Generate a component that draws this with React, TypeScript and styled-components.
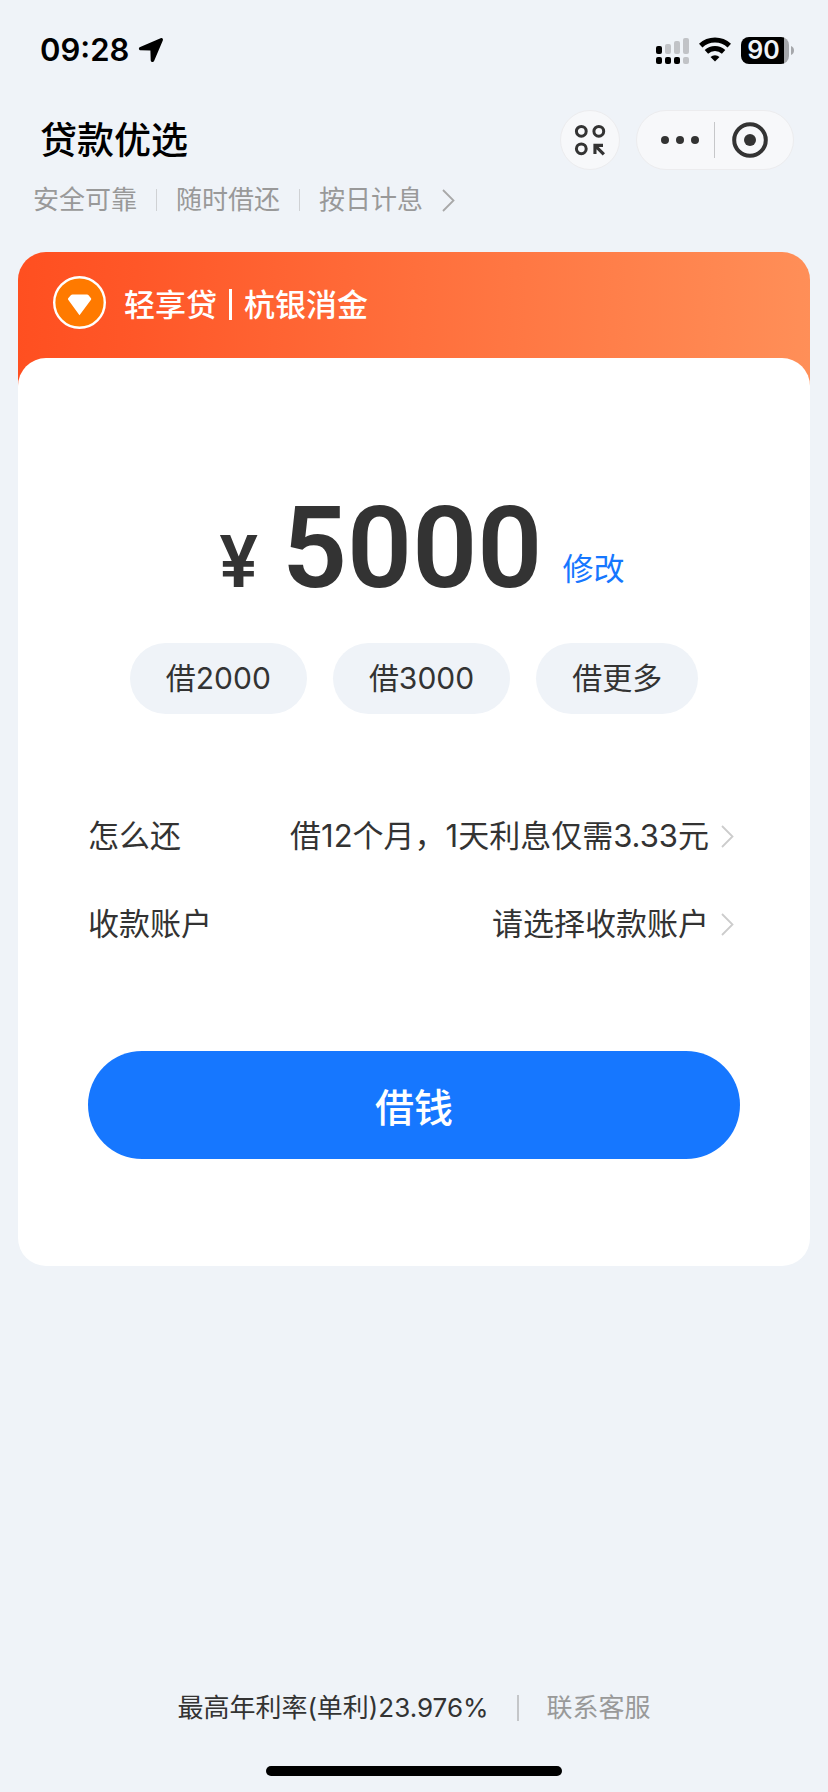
import React from 'react';
import styled, { createGlobalStyle } from 'styled-components';

const GlobalStyle = createGlobalStyle`
  *, *::before, *::after { box-sizing: border-box; }
  body {
    margin: 0;
    background: #eff3f8;
    color: #333;
    font-family: Inter, 'Noto Sans CJK SC', sans-serif;
  }
  button { font-family: inherit; border: 0; margin: 0; padding: 0; background: none; color: inherit; cursor: pointer; }
  a { color: inherit; text-decoration: none; }
  svg { display: block; flex: none; }
`;

const Page = styled.div`
  display: flex;
  flex-direction: column;
  min-height: 100vh;
`;

const StatusBar = styled.div`
  display: flex;
  align-items: center;
  justify-content: space-between;
  height: 100px;
  padding: 0 34px 0 40px;
  color: #000;
`;

const StatusGroup = styled.div<{ $gap: number }>`
  display: flex;
  align-items: center;
  gap: ${(p) => p.$gap}px;
`;

const Time = styled.time`
  font-size: 31px;
  font-weight: 600;
  line-height: 40px;
`;

const Battery = styled.div`
  display: flex;
  align-items: center;
  gap: 2px;
`;

const BatteryLevel = styled.div`
  width: 48px;
  height: 27px;
  padding-right: 3px;
  border-radius: 8px;
  background: linear-gradient(to right, #000 90%, #a5a7ab 90%);
  color: #eff3f8;
  font-size: 25px;
  font-weight: 600;
  line-height: 27px;
  text-align: center;
`;

const NavBar = styled.header`
  display: flex;
  align-items: center;
  justify-content: space-between;
  height: 80px;
  padding: 0 34px 0 40px;
`;

const Title = styled.h1`
  margin: 0;
  padding-top: 2px;
  color: #000;
  font-size: 37px;
  font-weight: 500;
  line-height: 52px;
`;

const NavActions = styled.div`
  display: flex;
  gap: 16px;
`;

const Capsule = styled.div<{ $inset?: number }>`
  display: flex;
  align-items: center;
  height: 60px;
  padding: 0 ${(p) => p.$inset ?? 0}px;
  border: 1px solid #ececee;
  border-radius: 30px;
  background: #f7f8fa;
`;

const CapsuleButton = styled.button<{ $width: number }>`
  display: flex;
  align-items: center;
  justify-content: center;
  width: ${(p) => p.$width}px;
  height: 58px;
`;

const Rule = styled.span<{ $height: number; $color: string; $width?: number }>`
  flex: none;
  width: ${(p) => p.$width ?? 1}px;
  height: ${(p) => p.$height}px;
  background: ${(p) => p.$color};
`;

const Features = styled.a`
  display: flex;
  align-items: center;
  align-self: flex-start;
  gap: 19px;
  height: 40px;
  margin-left: 33px;
  color: #999;
  font-size: 26px;
  line-height: 38px;
`;

const Card = styled.main`
  margin: 32px 18px 0;
`;

const CardHeader = styled.div`
  display: flex;
  align-items: center;
  gap: 18px;
  height: 134px;
  padding: 0 35px 34px;
  border-radius: 28px 28px 0 0;
  background: linear-gradient(92deg, #ff4f20 0%, #ff5728 15%, #ff6f3c 50%, #ff8f58 100%);
`;

const Provider = styled.h2`
  display: flex;
  align-items: center;
  gap: 12px;
  margin: 0;
  padding-top: 5px;
  color: #fff;
  font-size: 31px;
  font-weight: 500;
  line-height: 44px;
`;

const CardBody = styled.div`
  display: flex;
  flex-direction: column;
  margin-top: -28px;
  padding: 120px 70px 107px;
  border-radius: 28px;
  background: #fff;
`;

const Amount = styled.div`
  display: flex;
  align-items: baseline;
  justify-content: center;
  height: 120px;
  padding-left: 16px;
  font-family: Roboto, 'Noto Sans CJK SC', sans-serif;
  font-weight: 600;
  line-height: 140px;
`;

const Currency = styled.span`
  margin-right: 24px;
  font-size: 72px;
`;

const Value = styled.span`
  margin-right: 20px;
  font-size: 114px;
`;

const EditButton = styled.button`
  align-self: flex-end;
  margin-bottom: 6px;
  color: #1677ff;
  font-size: 31px;
  line-height: 44px;
`;

const Options = styled.div`
  display: flex;
  justify-content: center;
  gap: 26px;
  margin-top: 45px;
`;

const Option = styled.button`
  height: 71px;
  padding: 0 36px;
  border-radius: 36px;
  background: #eff3f8;
  font-size: 30px;
  line-height: 71px;
  white-space: nowrap;
`;

const Details = styled.div`
  margin-top: 78px;
`;

const DetailRow = styled.button`
  display: flex;
  align-items: center;
  width: 100%;
  height: 88px;
  padding-right: 6px;
  font-size: 31px;
  line-height: 44px;
`;

const DetailValue = styled.span`
  margin: 0 12px 0 auto;
`;

const Submit = styled.button`
  height: 108px;
  margin-top: 83px;
  border-radius: 54px;
  background: #1677ff;
  color: #fff;
  font-size: 39px;
  font-weight: 500;
`;

const Footer = styled.footer`
  display: flex;
  align-items: center;
  justify-content: center;
  gap: 28px;
  margin-top: auto;
  padding-top: 40px;
  font-size: 26px;
  line-height: 38px;
`;

const ContactLink = styled.a`
  color: #999;
`;

const HomeIndicator = styled.div`
  width: 296px;
  height: 10px;
  margin: 39px auto 16px;
  border-radius: 5px;
  background: #000;
`;

const LocationIcon = () => (
  <svg width="26" height="26" viewBox="0 0 26 26" fill="#000">
    <path d="M22.600 1.200c1.500-.7 2.900.5 2.200 2.200L16.200 23.800c-.8 1.900-3.400 1.600-3.500-.5l-.3-9.700-9.700-.3C.6 13.200.3 10.800 2.200 10z" />
  </svg>
);

const SignalIcon = () => (
  <svg width="33" height="27" viewBox="0 0 33 27">
    <g fill="#000">
      <rect x="0" y="9" width="6" height="8" rx="2" />
      <rect x="0" y="20" width="6" height="7" rx="2" />
      <rect x="9" y="20" width="6" height="7" rx="2" />
      <rect x="18" y="20" width="6" height="7" rx="2" />
    </g>
    <g fill="#c1c3c7">
      <rect x="9" y="7" width="6" height="10" rx="2" />
      <rect x="18" y="4" width="6" height="13" rx="2" />
      <rect x="27" y="1" width="6" height="16" rx="2" />
      <rect x="27" y="20" width="6" height="7" rx="2" />
    </g>
  </svg>
);

const WifiIcon = () => (
  <svg width="32" height="26" viewBox="0 0 32 26">
    <g fill="none" stroke="#000" strokeWidth="5">
      <path d="M1.700 8.600a20.800 20.800 0 0 1 28.600 0" />
      <path d="M7.400 14.800a12.700 12.700 0 0 1 17.200 0" />
    </g>
    <path d="M16 24.500l-4.500-4.600a6.600 6.600 0 0 1 9 0z" fill="#000" />
  </svg>
);

const BatteryTip = () => (
  <svg width="3" height="9" viewBox="0 0 3 9">
    <path d="M0 0c4 1.500 4 7.500 0 9z" fill="#a5a7ab" />
  </svg>
);

const AppsIcon = () => (
  <svg width="32" height="32" viewBox="0 0 32 32" fill="none" stroke="#333">
    <g strokeWidth="3">
      <circle cx="7.300" cy="7.300" r="4.900" />
      <circle cx="24.800" cy="7.300" r="4.900" />
      <circle cx="7.300" cy="24.800" r="4.900" />
    </g>
    <path d="M19.400 19.800h9.600v3.100h-4.300l6.300 6.300-2.300 2.300-6.200-6.200v4.600h-3.100z" fill="#333" stroke="none" />
  </svg>
);

const MoreIcon = () => (
  <svg width="40" height="10" viewBox="0 0 40 10" fill="#333">
    <circle cx="5" cy="5" r="4" />
    <circle cx="20" cy="5" r="4" />
    <circle cx="35" cy="5" r="4" />
  </svg>
);

const CloseIcon = () => (
  <svg width="36" height="36" viewBox="0 0 36 36">
    <circle cx="18" cy="18" r="15.800" fill="none" stroke="#333" strokeWidth="4" />
    <circle cx="18" cy="18" r="6" fill="#333" />
  </svg>
);

const DiamondBadge = () => (
  <svg width="53" height="53" viewBox="0 0 53 53">
    <circle cx="26.500" cy="26.500" r="25.300" fill="#ff7a00" stroke="#fff" strokeWidth="2.400" />
    <path d="M19.500 18.500h14.500q1 0 1.600.8l2.400 3q.5.700 0 1.500L26.500 39.300 15.200 23.800q-.5-.8 0-1.500l2.600-3q.7-.8 1.700-.8z" fill="#fff" />
  </svg>
);

const Chevron = ({ color }: { color: string }) => (
  <svg width="13" height="23" viewBox="0 0 13 23" fill="none" stroke={color} strokeWidth="1.800">
    <path d="M1 1l10.500 10.500L1 22" />
  </svg>
);

export default function App() {
  return (
    <Page>
      <GlobalStyle />
      <StatusBar>
        <StatusGroup $gap={9}>
          <Time>09:28</Time>
          <LocationIcon />
        </StatusGroup>
        <StatusGroup $gap={10}>
          <SignalIcon />
          <WifiIcon />
          <Battery>
            <BatteryLevel>90</BatteryLevel>
            <BatteryTip />
          </Battery>
        </StatusGroup>
      </StatusBar>

      <NavBar>
        <Title>贷款优选</Title>
        <NavActions>
          <Capsule>
            <CapsuleButton $width={58} aria-label="小程序">
              <AppsIcon />
            </CapsuleButton>
          </Capsule>
          <Capsule $inset={9}>
            <CapsuleButton $width={68} aria-label="更多">
              <MoreIcon />
            </CapsuleButton>
            <Rule $height={36} $color="#c6c7c9" />
            <CapsuleButton $width={69} aria-label="关闭">
              <CloseIcon />
            </CapsuleButton>
          </Capsule>
        </NavActions>
      </NavBar>

      <Features href="#features">
        <span>安全可靠</span>
        <Rule $height={22} $color="#cfd1d4" />
        <span>随时借还</span>
        <Rule $height={22} $color="#cfd1d4" />
        <span>按日计息</span>
        <Chevron color="#a8a8a8" />
      </Features>

      <Card>
        <CardHeader>
          <DiamondBadge />
          <Provider>
            轻享贷
            <Rule $height={31} $width={3} $color="#fff" />
            杭银消金
          </Provider>
        </CardHeader>
        <CardBody>
          <Amount>
            <Currency>¥</Currency>
            <Value>5000</Value>
            <EditButton>修改</EditButton>
          </Amount>
          <Options>
            <Option>借2000</Option>
            <Option>借3000</Option>
            <Option>借更多</Option>
          </Options>
          <Details>
            <DetailRow>
              <span>怎么还</span>
              <DetailValue>借12个月，1天利息仅需3.33元</DetailValue>
              <Chevron color="#ccc" />
            </DetailRow>
            <DetailRow>
              <span>收款账户</span>
              <DetailValue>请选择收款账户</DetailValue>
              <Chevron color="#ccc" />
            </DetailRow>
          </Details>
          <Submit>借钱</Submit>
        </CardBody>
      </Card>

      <Footer>
        <span>最高年利率(单利)23.976%</span>
        <Rule $height={26} $width={2} $color="#c4c6c9" />
        <ContactLink href="#contact">联系客服</ContactLink>
      </Footer>
      <HomeIndicator />
    </Page>
  );
}
